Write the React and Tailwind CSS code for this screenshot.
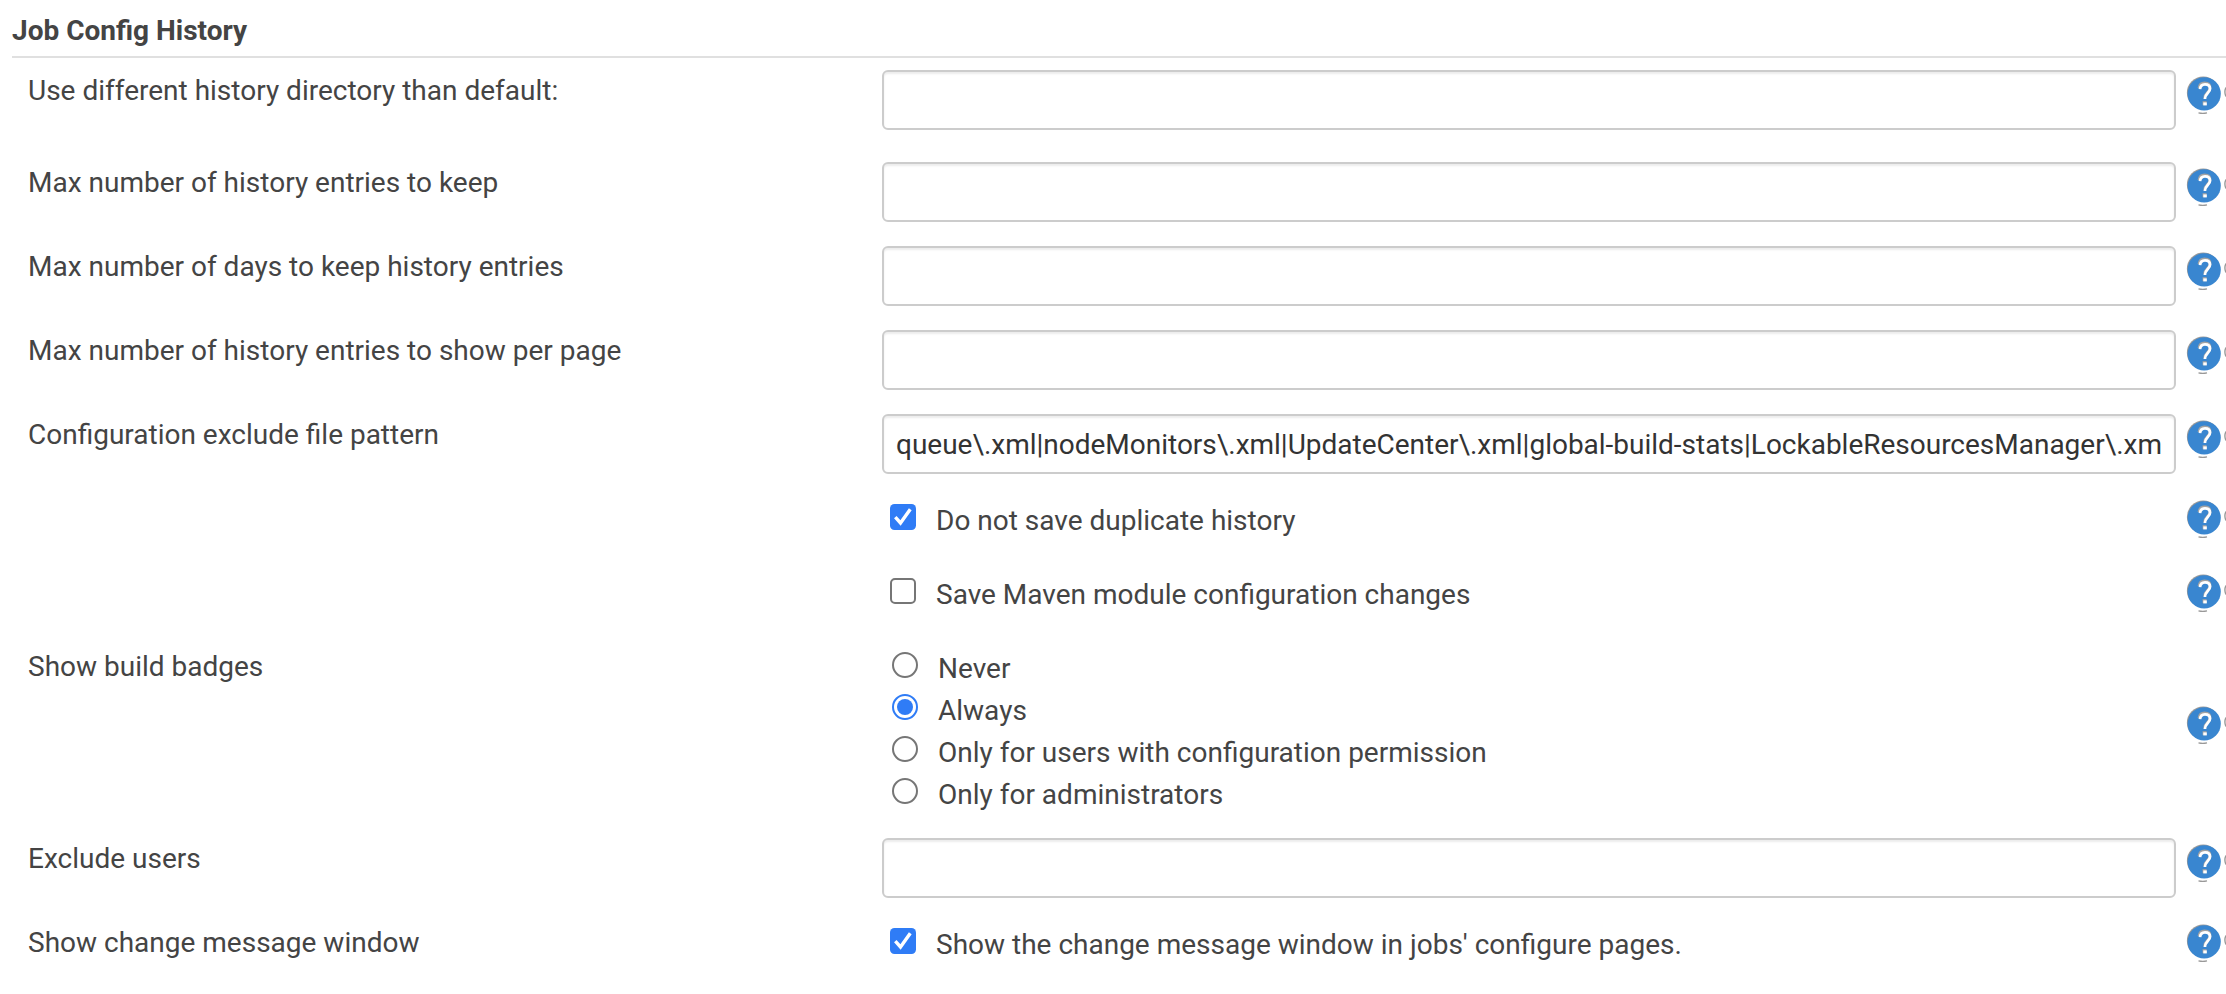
const F = "font-['Roboto',sans-serif]";

function Help() {
  return (
    <svg width="45" height="46" viewBox="0 0 45 46" className="block shrink-0">
      <circle cx="22.2" cy="22.9" r="16.3" fill="#999" />
      <circle cx="23.2" cy="23.8" r="16.6" fill="#3986d0" />
      <path d="M18 18.2c.4-3.5 2.8-5.2 5.6-5.2 3.3 0 5.5 1.8 5.5 4.9 0 4.2-5.5 4.8-5.5 10.4" fill="none" stroke="#a3a3a3" strokeWidth="2.8" />
      <path d="M19 19.2c.3-3.3 2.5-4.9 5-4.9 3.1 0 5 1.7 5 4.5 0 4.1-5.1 4.7-5.1 10.2" fill="none" stroke="#fff" strokeWidth="2.8" />
      <rect x="21.6" y="31.2" width="4" height="4" fill="#a3a3a3" />
      <rect x="22.3" y="32.4" width="3.5" height="3" fill="#fff" />
      <path d="M17.5 42.9q4.3 1 8.5 0" fill="none" stroke="#999" strokeWidth="1.1" />
      <path d="M44.9 17.5q-2 4.5 0 9" fill="none" stroke="#999" strokeWidth="1.4" />
    </svg>
  );
}

function Row({ label, children, className, help = "" }) {
  return (
    <div className={"flex w-full items-start " + className}>
      <div className="w-[854px] shrink-0 leading-[42px]">{label}</div>
      <div className="w-[1294px] shrink-0">{children}</div>
      <div className={"ml-[5px] w-[45px] shrink-0 overflow-hidden " + help}><Help /></div>
    </div>
  );
}

function Field({ value = "" }) {
  return (
    <div className="flex h-[60px] items-center overflow-hidden whitespace-nowrap rounded-[6px] border-2 border-[#ccc] px-3 pt-0.5 tracking-[-0.01px] text-[#333] shadow-[inset_0_2px_2px_rgba(0,0,0,0.075)]">
      {value}
    </div>
  );
}

function Check({ on, children }) {
  return (
    <div className="flex items-start pl-2">
      {on ? (
        <svg width="26" height="26" viewBox="0 0 26 26" className="block">
          <rect width="26" height="26" rx="4.5" fill="#2f7cf6" />
          <path d="M5.3 13.2l5.2 5.8 9.8-13.8" fill="none" stroke="#fff" strokeWidth="3.4" />
        </svg>
      ) : (
        <div className="size-[26px] rounded-[5px] border-2 border-[#767676]" />
      )}
      <span className="ml-5 leading-[34px]">{children}</span>
    </div>
  );
}

function Radio({ on, children }) {
  return (
    <div className="flex h-[42px] items-start pl-2.5">
      <svg width="26" height="26" viewBox="0 0 26 26" className="block">
        <circle cx="13" cy="13" r="12" fill="none" stroke={on ? "#2f7cf6" : "#767676"} strokeWidth="2" />
        {on && <circle cx="13" cy="13" r="8" fill="#2f7cf6" />}
      </svg>
      <span className="ml-5 leading-[34px]">{children}</span>
    </div>
  );
}

export default function App() {
  return (
    <div className={"h-[994px] w-[2226px] overflow-hidden bg-white text-[28px] text-[#444] " + F}>
      <div className="ml-3 h-[58px] border-b-2 border-[#e0e0e0] pt-[10px] font-bold leading-[42px]">Job Config History</div>
      <div className="flex flex-col pl-7 pt-3">
        <Row className="h-[92px]" label="Use different history directory than default:"><Field /></Row>
        <Row className="h-[84px]" label="Max number of history entries to keep"><Field /></Row>
        <Row className="h-[84px]" label="Max number of days to keep history entries"><Field /></Row>
        <Row className="h-[84px]" label="Max number of history entries to show per page"><Field /></Row>
        <Row className="h-[90px]" label="Configuration exclude file pattern">
          <Field value="queue\.xml|nodeMonitors\.xml|UpdateCenter\.xml|global-build-stats|LockableResourcesManager\.xm" />
        </Row>
        <Row className="h-[74px]" help="-mt-[10px]" label=""><Check on>Do not save duplicate history</Check></Row>
        <Row className="h-[74px]" help="-mt-[10px]" label=""><Check>Save Maven module configuration changes</Check></Row>
        <Row className="h-[186px]" help="mt-[48px]" label={<span className="block -mt-[6px]">Show build badges</span>}>
          <Radio>Never</Radio>
          <Radio on>Always</Radio>
          <Radio>Only for users with configuration permission</Radio>
          <Radio>Only for administrators</Radio>
        </Row>
        <Row className="h-[90px]" label="Exclude users"><Field /></Row>
        <Row className="h-[60px]" help="-mt-[10px]" label={<span className="block -mt-[6px]">Show change message window</span>}>
          <Check on>Show the change message window in jobs' configure pages.</Check>
        </Row>
      </div>
    </div>
  );
}
